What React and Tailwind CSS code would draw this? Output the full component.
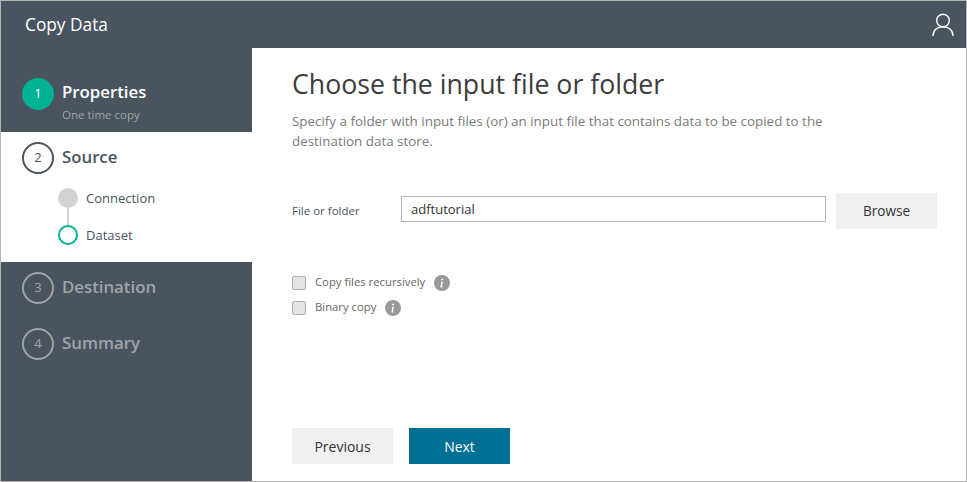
import React from 'react'
import { BsInfoCircleFill } from 'react-icons/bs'

const Step = ({ n, label, muted }) => (
  <div className="flex items-center h-[32px] pl-[21px]">
    <span className={`flex items-center justify-center w-8 h-8 rounded-full border-2 text-[13px] ${muted ? 'border-[#a0a4a8] text-[#a0a4a8]' : 'border-[#4a545e] text-[#4a545e]'}`}>{n}</span>
    <span className={`ml-2 -mt-[2px] text-[16.8px] font-semibold ${muted ? 'text-[#a0a4a8]' : 'text-[#4a545e]'}`}>{label}</span>
  </div>
)

const Check = ({ label }) => (
  <div className="flex items-center h-[25px]">
    <span className="w-[14px] h-[14px] rounded-[2px] border border-[#b0b0b0] bg-[#e6e6e6]" />
    <span className="ml-[9px] text-[11.3px] text-[#666]">{label}</span>
    <BsInfoCircleFill className="ml-[9px] text-[#999999]" size={16} />
  </div>
)

export default function App() {
  return (
    <div className="flex flex-col w-[967px] h-[482px] border border-[#b4b4b4] font-['Open_Sans',sans-serif] bg-white overflow-hidden">
      <header className="flex items-center justify-between h-[47px] pl-6 pr-[12px] bg-[#4a545e] text-white text-[17.3px]">
        <span>Copy Data</span>
        <svg width="22" height="24" viewBox="0 0 22 24" fill="none" stroke="#ffffff" strokeWidth="1.4">
          <circle cx="11" cy="7.5" r="6.3" />
          <path d="M1 23c0-5.500 4-9.200 10-9.200s10 3.700 10 9.200" />
        </svg>
      </header>
      <div className="flex flex-1">
        <aside className="flex flex-col w-[251px] bg-[#4a545e]">
          <div className="flex h-[84px] pl-[21px] pt-[30px]">
            <span className="flex items-center justify-center w-8 h-8 rounded-full bg-[#00b294] text-white text-[13px]">1</span>
            <div className="ml-2">
              <div className="text-[16.8px] leading-[28px] font-semibold text-white">Properties</div>
              <div className="text-[11.5px] leading-[16px] mt-[1px] text-[#a0a4a8]">One time copy</div>
            </div>
          </div>
          <div className="bg-white h-[130px] pt-[10px]">
            <Step n="2" label="Source" />
            <div className="flex flex-col pl-[57px] mt-[14px]">
              <div className="flex items-center h-5">
                <span className="w-5 h-5 rounded-full bg-[#d2d2d2]" />
                <span className="ml-2 text-[13px] leading-[18px] text-[#4a545e]">Connection</span>
              </div>
              <div className="w-[2px] h-[17px] ml-[9px] bg-[#d2d2d2]" />
              <div className="flex items-center h-5">
                <span className="w-5 h-5 rounded-full border-2 border-[#00b294]" />
                <span className="ml-2 text-[13px] leading-[18px] text-[#4a545e]">Dataset</span>
              </div>
            </div>
          </div>
          <div className="flex flex-col gap-6 pt-[10px]">
            <Step n="3" label="Destination" muted />
            <Step n="4" label="Summary" muted />
          </div>
        </aside>
        <main className="flex flex-col flex-1 pl-10 pr-[29px]">
          <h1 className="mt-[16px] text-[26.7px] leading-[40px] text-[#3c3c3c]">Choose the input file or folder</h1>
          <p className="mt-[7px] text-[13.4px] leading-[20px] text-[#7a7a7a] w-[560px]">Specify a folder with input files (or) an input file that contains data to be copied to the destination data store.</p>
          <div className="flex items-center mt-[42px]">
            <label className="w-[109px] text-[11.5px] text-[#4a545e]">File or folder</label>
            <div className="flex items-center self-start mt-[3px] w-[425px] h-[26px] px-[9px] pt-[1px] border border-[#b4b4b4] text-[13px] text-[#333]">adftutorial</div>
            <button className="w-[101px] h-9 ml-[10px] bg-[#f1f1f1] text-[13.6px] text-[#333]">Browse</button>
          </div>
          <div className="flex flex-col mt-[41px]">
            <Check label="Copy files recursively" />
            <Check label="Binary copy" />
          </div>
          <div className="flex gap-4 mt-[108px]">
            <button className="w-[101px] h-9 bg-[#f1f1f1] text-[14px] text-[#333]">Previous</button>
            <button className="w-[101px] h-9 bg-[#006f94] text-[14px] text-white">Next</button>
          </div>
        </main>
      </div>
    </div>
  )
}
